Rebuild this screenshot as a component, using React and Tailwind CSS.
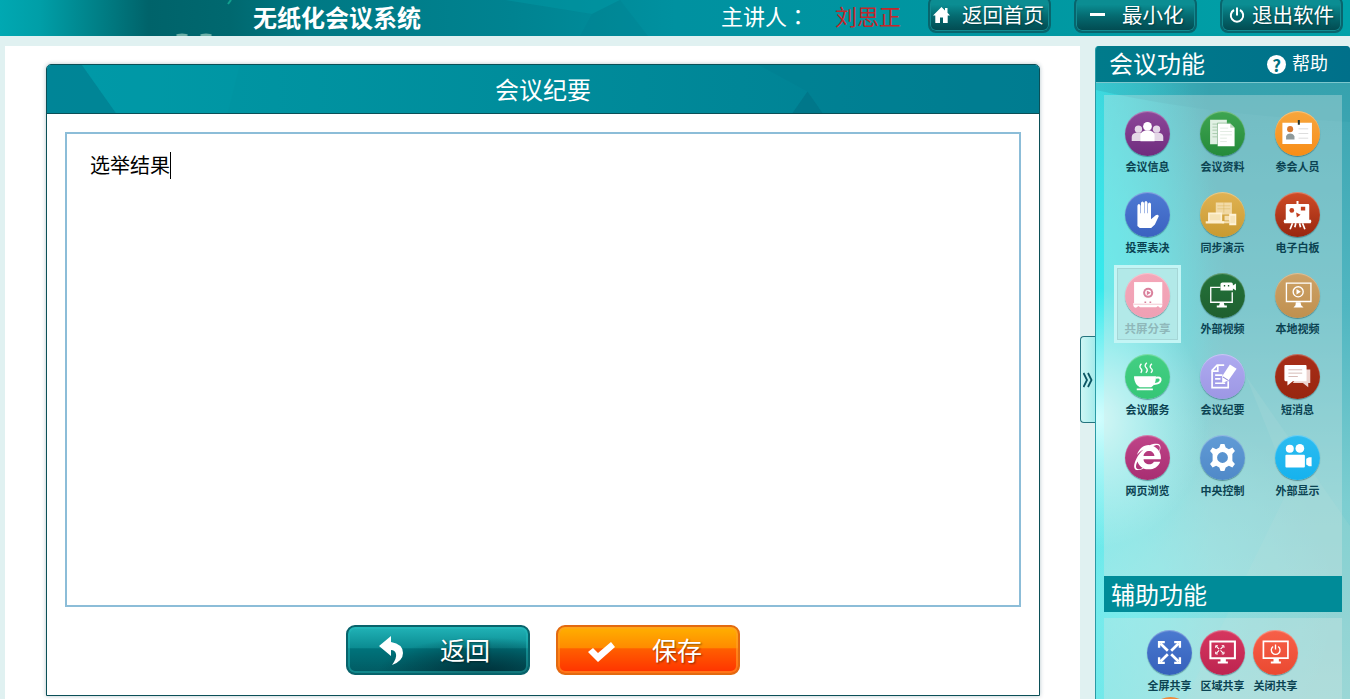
import { FaInternetExplorer } from 'react-icons/fa';

const Disc = ({ tone, children, className = '' }) => (
    <span className={`block size-[45px] rounded-full bg-linear-to-b shadow-[0_1px_1px_rgba(0,60,70,0.45),inset_0_1px_1px_rgba(255,255,255,0.35)] ${tone} ${className}`}>
        <svg viewBox="-67 -67 134 134" className="size-full text-white" fill="currentColor">
            {children}
        </svg>
    </span>
);

const Line = (props) => <path fill="none" stroke="currentColor" strokeWidth="5" {...props} />;

const Expand = () => (
    <>
        <Line strokeWidth="8" d="M-5 -5L-27 -27M5 -5L27 -27M-5 5L-27 27M5 5L27 27" />
        <Line strokeWidth="7" d="M-31 -14V-31H-14M14 -31H31V-14M-31 14V31H-14M14 31H31V14" />
    </>
);

const icons = {
    people: (
        <>
            <g opacity="0.8">
                <circle cx="-27" cy="-13" r="11" />
                <circle cx="27" cy="-13" r="11" />
                <path d="M-47 22v-12q1 -10 13 -12h13q10 2 10 12v12zM47 22v-12q-1 -10 -13 -12h-13q-10 2 -10 12v12z" />
            </g>
            <circle cx="0" cy="-21" r="13" />
            <path d="M-21 23v-19q2 -10 14 -13h14q12 3 14 13v19z" />
        </>
    ),
    docs: (
        <>
            <path opacity="0.85" d="M-37 -41h50v73h-50z" />
            <Line stroke="#93bd99" strokeWidth="2" d="M-30 -28h18M-30 -19h14M-30 -10h14M-30 0h14M-30 10h14" />
            <path d="M-14 -30h37l13 13v55h-50z" />
            <Line stroke="#7fb389" strokeWidth="2" d="M-15 38v-69h38" />
            <path fill="#bcd8bf" d="M23 -30l13 13h-13z" />
            <Line stroke="#d3e3d5" strokeWidth="2" d="M-7 -16h24M-7 -6h35M-7 4h35M-7 14h20M-7 24h20" />
        </>
    ),
    card: (
        <>
            <path d="M-45 -32h88v63h-88z" />
            <path fill="#28342f" d="M1 -40h6v14h-6z" />
            <circle cx="-22" cy="-13" r="9" fill="#d9772d" />
            <path fill="#8f9a9b" d="M-34 18v-9q2 -9 12 -9t13 9v9z" />
            <Line stroke="#cccccc" strokeWidth="2" d="M3 -14h29M3 0h29M3 14h29" />
        </>
    ),
    hand: <path d="M-30 34V-26q1 -5 4.500 -5t4.500 5V-4h1.500V-34q1 -5 4.500 -5t4.500 5V-4h1.500V-35q1 -5 4.500 -5t4.500 5V-4h1.500V-31q1 -5 4.500 -5t4.500 5V14l14 -12q8 -3 9 3L22 30L11 40H-23z" />,
    devices: (
        <g fill="#fff3d8">
            <path opacity="0.65" d="M-20 -36h48v36h-48z" />
            <path opacity="0.95" d="M-43 -6h42v26h6v7h-55v-7h7z" />
            <path opacity="0.75" d="M6 4h22v8h-6v6h-16zM-2 20h22v6h-22z" />
            <path d="M20 -2h21v34h-21z" />
            <path fill="#d7ad4a" d="M23 4h15v22h-15zM-38 -1h32v18h-32z" opacity="0.2" />
            <Line stroke="#d7ad4a" strokeWidth="2" opacity="0.6" d="M-15 -26h38M-15 -17h38M4 -36v30" />
        </g>
    ),
    board: (
        <>
            <path d="M-3 -40h6v9h-6zM-31 -31h63q3 0 3 4v43h5q3 6 -1 10h-78q-4 -4 -1 -10h5v-43q0 -4 4 -4z" />
            <Line d="M-15 26L-22 44M15 26L22 44M-5 26L-8 38M6 26l3 12" />
            <g fill="#c23e1d">
                <circle cx="-17" cy="-12" r="7" />
                <path d="M10 -23h13v11h-13zM-4 -6l13 7l-11 8z" />
            </g>
        </>
    ),
    share: (
        <>
            <path d="M-40 -40h84v64h-84z" />
            <path d="M-42 22h86v9q-2 7 -8 5l-5 -5l-5 4h-48l-5 -4l-6 5q-7 1 -9 -5z" />
            <circle cx="2" cy="-8" r="15" fill="#d9809c" />
            <circle cx="2" cy="-8" r="9" />
            <path fill="#d9809c" d="M-2 -15l12 7l-12 7zM-9 18h5v4h-5zM6 18h5v4h-5z" />
            <Line stroke="#efabba" strokeWidth="2" d="M-40 26h84" />
        </>
    ),
    outerVideo: (
        <>
            <Line strokeWidth="4" d="M-6 -24H-35V20H29V-10" />
            <path d="M-8 22h12l2 8h7v6h-30v-6h7zM-6 -34q0 -5 6 -5h26q5 0 5 6v3l9 -6v21l-9 -6v6H-6z" />
            <path fill="#1b5f2f" d="M4 -31h4v4h-4zM16 -31h4v4h-4z" />
        </>
    ),
    localVideo: (
        <>
            <Line strokeWidth="4" d="M-33 -37h73v55h-73z" />
            <Line strokeWidth="4" d="M17 -11a15 15 0 1 1 -30 0a15 15 0 1 1 30 0z" />
            <path d="M-3 -19l13 8l-13 8zM-5 20h14l2 9l7 7h-30l6 -7z" />
        </>
    ),
    cup: (
        <>
            <path d="M-40 -1h65v6q-1 20 -14 27h-34q-14 -7 -17 -27zM-32 36h48v5h-48z" />
            <Line strokeWidth="6" d="M24 4q16 -4 15 7q-2 11 -20 11" />
            <Line strokeWidth="4" d="M-20 -11q6 -8 0 -13t2 -14M-5 -11q8 -8 1 -15t2 -15M10 -11q8 -8 1 -13t2 -14" />
        </>
    ),
    notes: (
        <>
            <Line strokeWidth="5" d="M5 -34H-16L-31 -18V33H17V14M-31 -16h17v-18" />
            <Line strokeWidth="5" d="M-22 -4h22M-22 7h16M-22 20h30" />
            <path d="M22 -36l20 13l-24 34l-19 9v-21z" />
            <Line stroke="#9088d4" strokeWidth="3" d="M1 1l15 10" />
        </>
    ),
    chat: (
        <>
            <path opacity="0.8" d="M16 -21h22v40h-6v13l-16 -13h-30z" />
            <path d="M-36 -34h60q3 0 3 4v44h-41l-16 13v-13h-6q-3 0 -3 -4v-40q0 -4 3 -4z" />
            <Line stroke="#c39a94" strokeWidth="2" d="M-27 -20h41M-27 -10h41M-27 0h28" />
        </>
    ),
    browser: (
        <g transform="translate(-40 -42)">
            <FaInternetExplorer size={80} />
        </g>
    ),
    gear: (
        <path
            fillRule="evenodd"
            transform="scale(0.95)"
            d="M-6 -42h12l4 11l10 5l11 -5l8 11l-8 9v22l8 9l-8 11l-11 -5l-10 5l-4 11h-12l-4 -11l-10 -5l-11 5l-8 -11l8 -9v-22l-8 -9l8 -11l11 5l10 -5zM17 0a17 17 0 1 0 -34 0a17 17 0 1 0 34 0z"
        />
    ),
    camera: (
        <>
            <circle cx="-23" cy="-26" r="12" />
            <circle cx="7" cy="-27" r="13" />
            <rect x="-36" y="-8" width="58" height="38" rx="3" />
            <path d="M26 4l8 -5h8v27h-8l-8 -5z" />
        </>
    ),
    expand: <Expand />,
    region: (
        <>
            <Line strokeWidth="6" d="M-36 -33h73v50h-73z" />
            <path d="M-6 19h16v8h6v6h-30v-6h8z" />
            <g transform="translate(-8 -8) scale(0.4)"><Expand /></g>
        </>
    ),
    close: (
        <>
            <Line d="M-36 -33h73v50h-73z" />
            <path d="M-6 19h16v8h6v6h-30v-6h8z" />
            <Line strokeWidth="4" d="M-7 -18a13 13 0 1 0 15 0M0 -24v15" />
        </>
    ),
};

const features = [
    { label: '会议信息', icon: 'people', tone: 'from-[#8d4799] to-[#6f2c7e]' },
    { label: '会议资料', icon: 'docs', tone: 'from-[#3ea551] to-[#248a3a]' },
    { label: '参会人员', icon: 'card', tone: 'from-[#f6a63c] to-[#f88d13]' },
    { label: '投票表决', icon: 'hand', tone: 'from-[#4e7ad3] to-[#3b62c0]' },
    { label: '同步演示', icon: 'devices', tone: 'from-[#e0b252] to-[#c99a30]' },
    { label: '电子白板', icon: 'board', tone: 'from-[#d04c27] to-[#98260f]' },
    { label: '共屏分享', icon: 'share', tone: 'from-[#f4a6b8] to-[#efa0b4]', disabled: true },
    { label: '外部视频', icon: 'outerVideo', tone: 'from-[#23733a] to-[#1f5f2f]' },
    { label: '本地视频', icon: 'localVideo', tone: 'from-[#cda266] to-[#c0904f]' },
    { label: '会议服务', icon: 'cup', tone: 'from-[#43cf83] to-[#35c677]' },
    { label: '会议纪要', icon: 'notes', tone: 'from-[#aeaaf0] to-[#9d97e4]' },
    { label: '短消息', icon: 'chat', tone: 'from-[#a82e18] to-[#98260f]' },
    { label: '网页浏览', icon: 'browser', tone: 'from-[#bf4488] to-[#a82e72]' },
    { label: '中央控制', icon: 'gear', tone: 'from-[#609bd6] to-[#5089c8]' },
    { label: '外部显示', icon: 'camera', tone: 'from-[#2bbcf0] to-[#15b2ee]' },
];

const shareTools = [
    { label: '全屏共享', icon: 'expand', tone: 'from-[#4b7ad0] to-[#3560bb]' },
    { label: '区域共享', icon: 'region', tone: 'from-[#d6365f] to-[#bd2450]' },
    { label: '关闭共享', icon: 'close', tone: 'from-[#f76049] to-[#ea4930]' },
];

const Tool = ({ item, className = '' }) => (
    <button className={`relative flex flex-col items-center ${className}`}>
        {item.disabled && (
            <span className="absolute -top-[8px] left-[4px] h-[78px] w-[67px] border-[3px] border-[#c3f5f5] bg-[#b2e9e8] shadow-[inset_0_0_0_1px_#a5d6d6]" />
        )}
        <Disc tone={item.tone} className="relative">{icons[item.icon]}</Disc>
        <span
            className={`relative mt-[2px] leading-[16px] font-bold whitespace-nowrap ${item.disabled ? 'text-[11.5px] text-[#8fb8ba]' : 'text-[11px] text-[#0b4352]'}`}
        >
            {item.label}
        </span>
    </button>
);

const HeaderButton = ({ icon, label, className = '' }) => (
    <button className={`-mt-[4px] flex h-[37px] w-[123px] shrink-0 items-center rounded-lg border-2 border-[#08656d] bg-linear-to-b from-[#0b8d92] from-20% via-[#056a70] via-55% to-[#024a50] text-[20.5px] text-white shadow-[inset_0_0_0_1px_#138b91] [text-shadow:1px_1px_2px_#003d42] ${className}`}>
        {icon}
        <span className="whitespace-nowrap">{label}</span>
    </button>
);

const ActionButton = ({ icon, label, tone }) => (
    <button className={`flex h-[50px] w-[184px] items-center rounded-[9px] border-2 pl-[30px] text-[25px] text-white [text-shadow:1px_1px_2px_rgba(0,0,0,0.45)] ${tone}`}>
        {icon}
        {label}
    </button>
);

export default function App() {
    return (
        <div className="flex h-[699px] w-[1350px] flex-col overflow-hidden bg-[#e0f1f1] font-['Noto_Sans_CJK_SC',sans-serif]">
            <header className="relative flex h-9 shrink-0 items-start bg-[linear-gradient(90deg,#00a8b2_0%,#009ea7_3%,#007a81_8%,#00636a_11%,#00686f_17%,#007984_23%,#008391_38%,#0091a0_50%,#0097a1_75%,#00a2a9_100%)] text-white">
                <svg className="absolute inset-0 h-9 w-full" viewBox="0 0 1350 36">
                    <path fill="#0097a3" opacity="0.5" d="M505 0h115l-28 14z" />
                    <path fill="#007c8c" opacity="0.25" d="M592 14L620 0l28 36H580z" />
                    <path stroke="#12a08f" strokeWidth="2" d="M228 4l3 -4" />
                    <ellipse cx="182" cy="35" rx="6" ry="1.5" fill="#6fb0a8" />
                    <ellipse cx="206" cy="35" rx="6" ry="1.5" fill="#6fb0a8" />
                </svg>
                <h1 className="relative ml-[253px] w-[468px] text-[24px] leading-[34px] font-bold">无纸化会议系统</h1>
                <span className="relative w-[114px] text-[22px] leading-[31px]">
                    主讲人<span className="font-['Noto_Sans_CJK_TC',sans-serif]" lang="zh-TW">：</span>
                </span>
                <span className="relative w-[93px] text-[22px] leading-[31px] text-[#c3272b]">刘思正</span>
                <HeaderButton
                    icon={
                        <svg viewBox="0 0 17 16" className="mr-[12px] ml-[3px] h-4 w-[17px] shrink-0" fill="#fff">
                            <path d="M8.500 0L12 3.400V1h2.500v4.800L17 8.500H14.700V16H10V10.500H7V16H2.300V8.500H0z" />
                        </svg>
                    }
                    label="返回首页"
                />
                <HeaderButton className="ml-[23px]" icon={<span className="mr-[17px] ml-[14px] h-[3px] w-[15px] bg-white" />} label="最小化" />
                <HeaderButton
                    className="ml-[23px]"
                    icon={
                        <svg viewBox="0 0 16 16" className="mr-[7px] ml-[7px] size-4 shrink-0" fill="none" stroke="#fff" strokeWidth="2">
                            <path d="M5 3a6.200 6.200 0 1 0 6 0M8 0.500v8" />
                        </svg>
                    }
                    label="退出软件"
                />
            </header>

            <div className="flex min-h-0 flex-1 pt-[10px] pl-[5px]">
                <main className="w-[1075px] bg-white pt-[18px] pl-[41px]">
                    <section className="flex h-[632px] w-[994px] flex-col rounded-t-[5px] border border-[#0b4f57] shadow-[0_0_4px_rgba(0,60,80,0.3)]">
                        <div className="relative h-[49px] shrink-0 overflow-hidden rounded-t-[4px] border-b border-[#0b4f57] bg-linear-to-r from-[#0099a6] via-[#008c9b] to-[#007d91]">
                            <svg className="absolute inset-0 size-full" viewBox="0 0 994 49" preserveAspectRatio="none">
                                <path fill="#007f92" opacity="0.75" d="M0 0h35l34 49H0z" />
                                <path fill="#00a0ad" opacity="0.2" d="M35 0h158l-12 49H69z" />
                                <path fill="#007c8e" opacity="0.35" d="M713 0h112l-63 27zM762 27L825 0h169v49H777z" />
                                <path fill="#00697c" opacity="0.45" d="M762 27l15 22h-30z" />
                            </svg>
                            <h2 className="relative text-center text-[24px] leading-[47px] text-white">会议纪要</h2>
                        </div>
                        <div className="mx-[18px] mt-[18px] h-[475px] shrink-0 border-2 border-[#8cbdd8] bg-white px-[23px] pt-[17px]">
                            <p className="flex items-center text-[20px] leading-[28px] text-black">
                                选举结果<span className="h-[27px] w-px bg-black" />
                            </p>
                        </div>
                        <div className="mt-[18px] flex justify-center gap-[26px]">
                            <ActionButton
                                label={<span className="-mt-px ml-[35px]">返回</span>}
                                tone="border-[#08636b] bg-[radial-gradient(ellipse_at_75%_100%,#00313a_0%,transparent_55%),linear-gradient(180deg,#21b3b7_0%,#0b8b91_46%,#00737b_47%,#015a62_100%)] shadow-[inset_0_0_0_2px_rgba(40,190,190,0.45)]"
                                icon={
                                    <svg viewBox="0 0 27 29" className="h-[29px] w-[27px]" fill="#fff">
                                        <path d="M1 10L13 0V6Q25 8 25 17Q25 25 14 29Q19 22 18 18Q17 14 13 14V20Z" />
                                    </svg>
                                }
                            />
                            <ActionButton
                                label={<span className="-mt-px ml-[36px]">保存</span>}
                                tone="border-[#e36a10] bg-[linear-gradient(180deg,#ffb000_0%,#ff8a00_46%,#ff5f00_47%,#ff3200_100%)] shadow-[inset_0_0_0_2px_rgba(255,160,40,0.6)]"
                                icon={
                                    <svg viewBox="0 0 29 22" className="mt-[3px] -ml-px h-[22px] w-[29px]" fill="#fff">
                                        <path d="M1 11L6 7L11 12L24 1L28 6L11 21Z" />
                                    </svg>
                                }
                            />
                        </div>
                    </section>
                </main>

                <button className="mt-[290px] flex h-[87px] w-[15px] items-center justify-center rounded-l-[4px] border border-r-0 border-[#25747e] bg-linear-to-r from-[#cdf6f4] to-[#a5ecec]">
                    <svg viewBox="0 0 10 16" className="h-4 w-[10px] shrink-0" fill="none" stroke="#0b5563" strokeWidth="1.8">
                        <path d="M0.500 1L4 8l-3.500 7M5 1l3.500 7L5 15" />
                    </svg>
                </button>

                <aside className="relative flex w-[255px] flex-col overflow-hidden rounded-t-[4px] border-l border-[#2a9aa5] bg-[radial-gradient(ellipse_110px_130px_at_0%_57%,rgba(220,255,255,0.95)_0%,transparent_100%),radial-gradient(ellipse_200px_200px_at_15%_85%,rgba(130,240,240,0.7)_0%,transparent_100%),radial-gradient(ellipse_130px_300px_at_0%_38%,rgba(50,238,240,0.85)_0%,transparent_100%),linear-gradient(90deg,rgba(70,240,244,0.6)_0%,transparent_45%),linear-gradient(180deg,#35a2ae_0%,#40a8b4_12%,#50b6c1_40%,#7cced1_70%,#96d6d6_100%)]">
                    <svg className="absolute inset-0 size-full" viewBox="0 0 254 653" preserveAspectRatio="none">
                        <path fill="#2e9aa8" opacity="0.3" d="M0 36h254v40q-150 -8 -254 -32z" />
                        <path fill="#b5dcd8" opacity="0.15" d="M150 330L194 440L90 653h164V480z" />
                    </svg>
                    <div className="relative flex h-[37px] shrink-0 items-center border-b border-[#7cc7cd] bg-linear-to-r from-[#007b8b] to-[#00708a] pl-[13px] text-white">
                        <span className="-mt-[2px] w-[158px] text-[24px]">会议功能</span>
                        <span className="flex size-[19px] items-center justify-center rounded-full bg-white text-[17px] leading-none font-bold text-[#007080]">?</span>
                        <span className="-mt-[3px] ml-[6px] text-[18px]">帮助</span>
                    </div>
                    <div className="relative mt-[12px] ml-[8px] grid h-[481px] w-[238px] shrink-0 auto-rows-[81px] grid-cols-[75px_75px_75px] bg-[#d8e8e4]/35 pt-[16px] pl-[6px]">
                        {features.map((item) => (
                            <Tool key={item.label} item={item} />
                        ))}
                    </div>
                    <h2 className="relative ml-[8px] h-9 w-[238px] shrink-0 bg-[#008b98] pl-[7px] text-[24px] leading-[35px] text-white">辅助功能</h2>
                    <div className="relative mt-[6px] ml-[8px] flex h-[81px] w-[238px] shrink-0 bg-[#d8e8e4]/35 pt-[12px] pl-[39px]">
                        {shareTools.map((item) => (
                            <Tool key={item.label} item={item} className="w-[53px]" />
                        ))}
                    </div>
                    <span className="absolute bottom-[-43px] left-[52px] size-[45px] rounded-full bg-[#f08a3c]" />
                </aside>
            </div>
        </div>
    );
}
